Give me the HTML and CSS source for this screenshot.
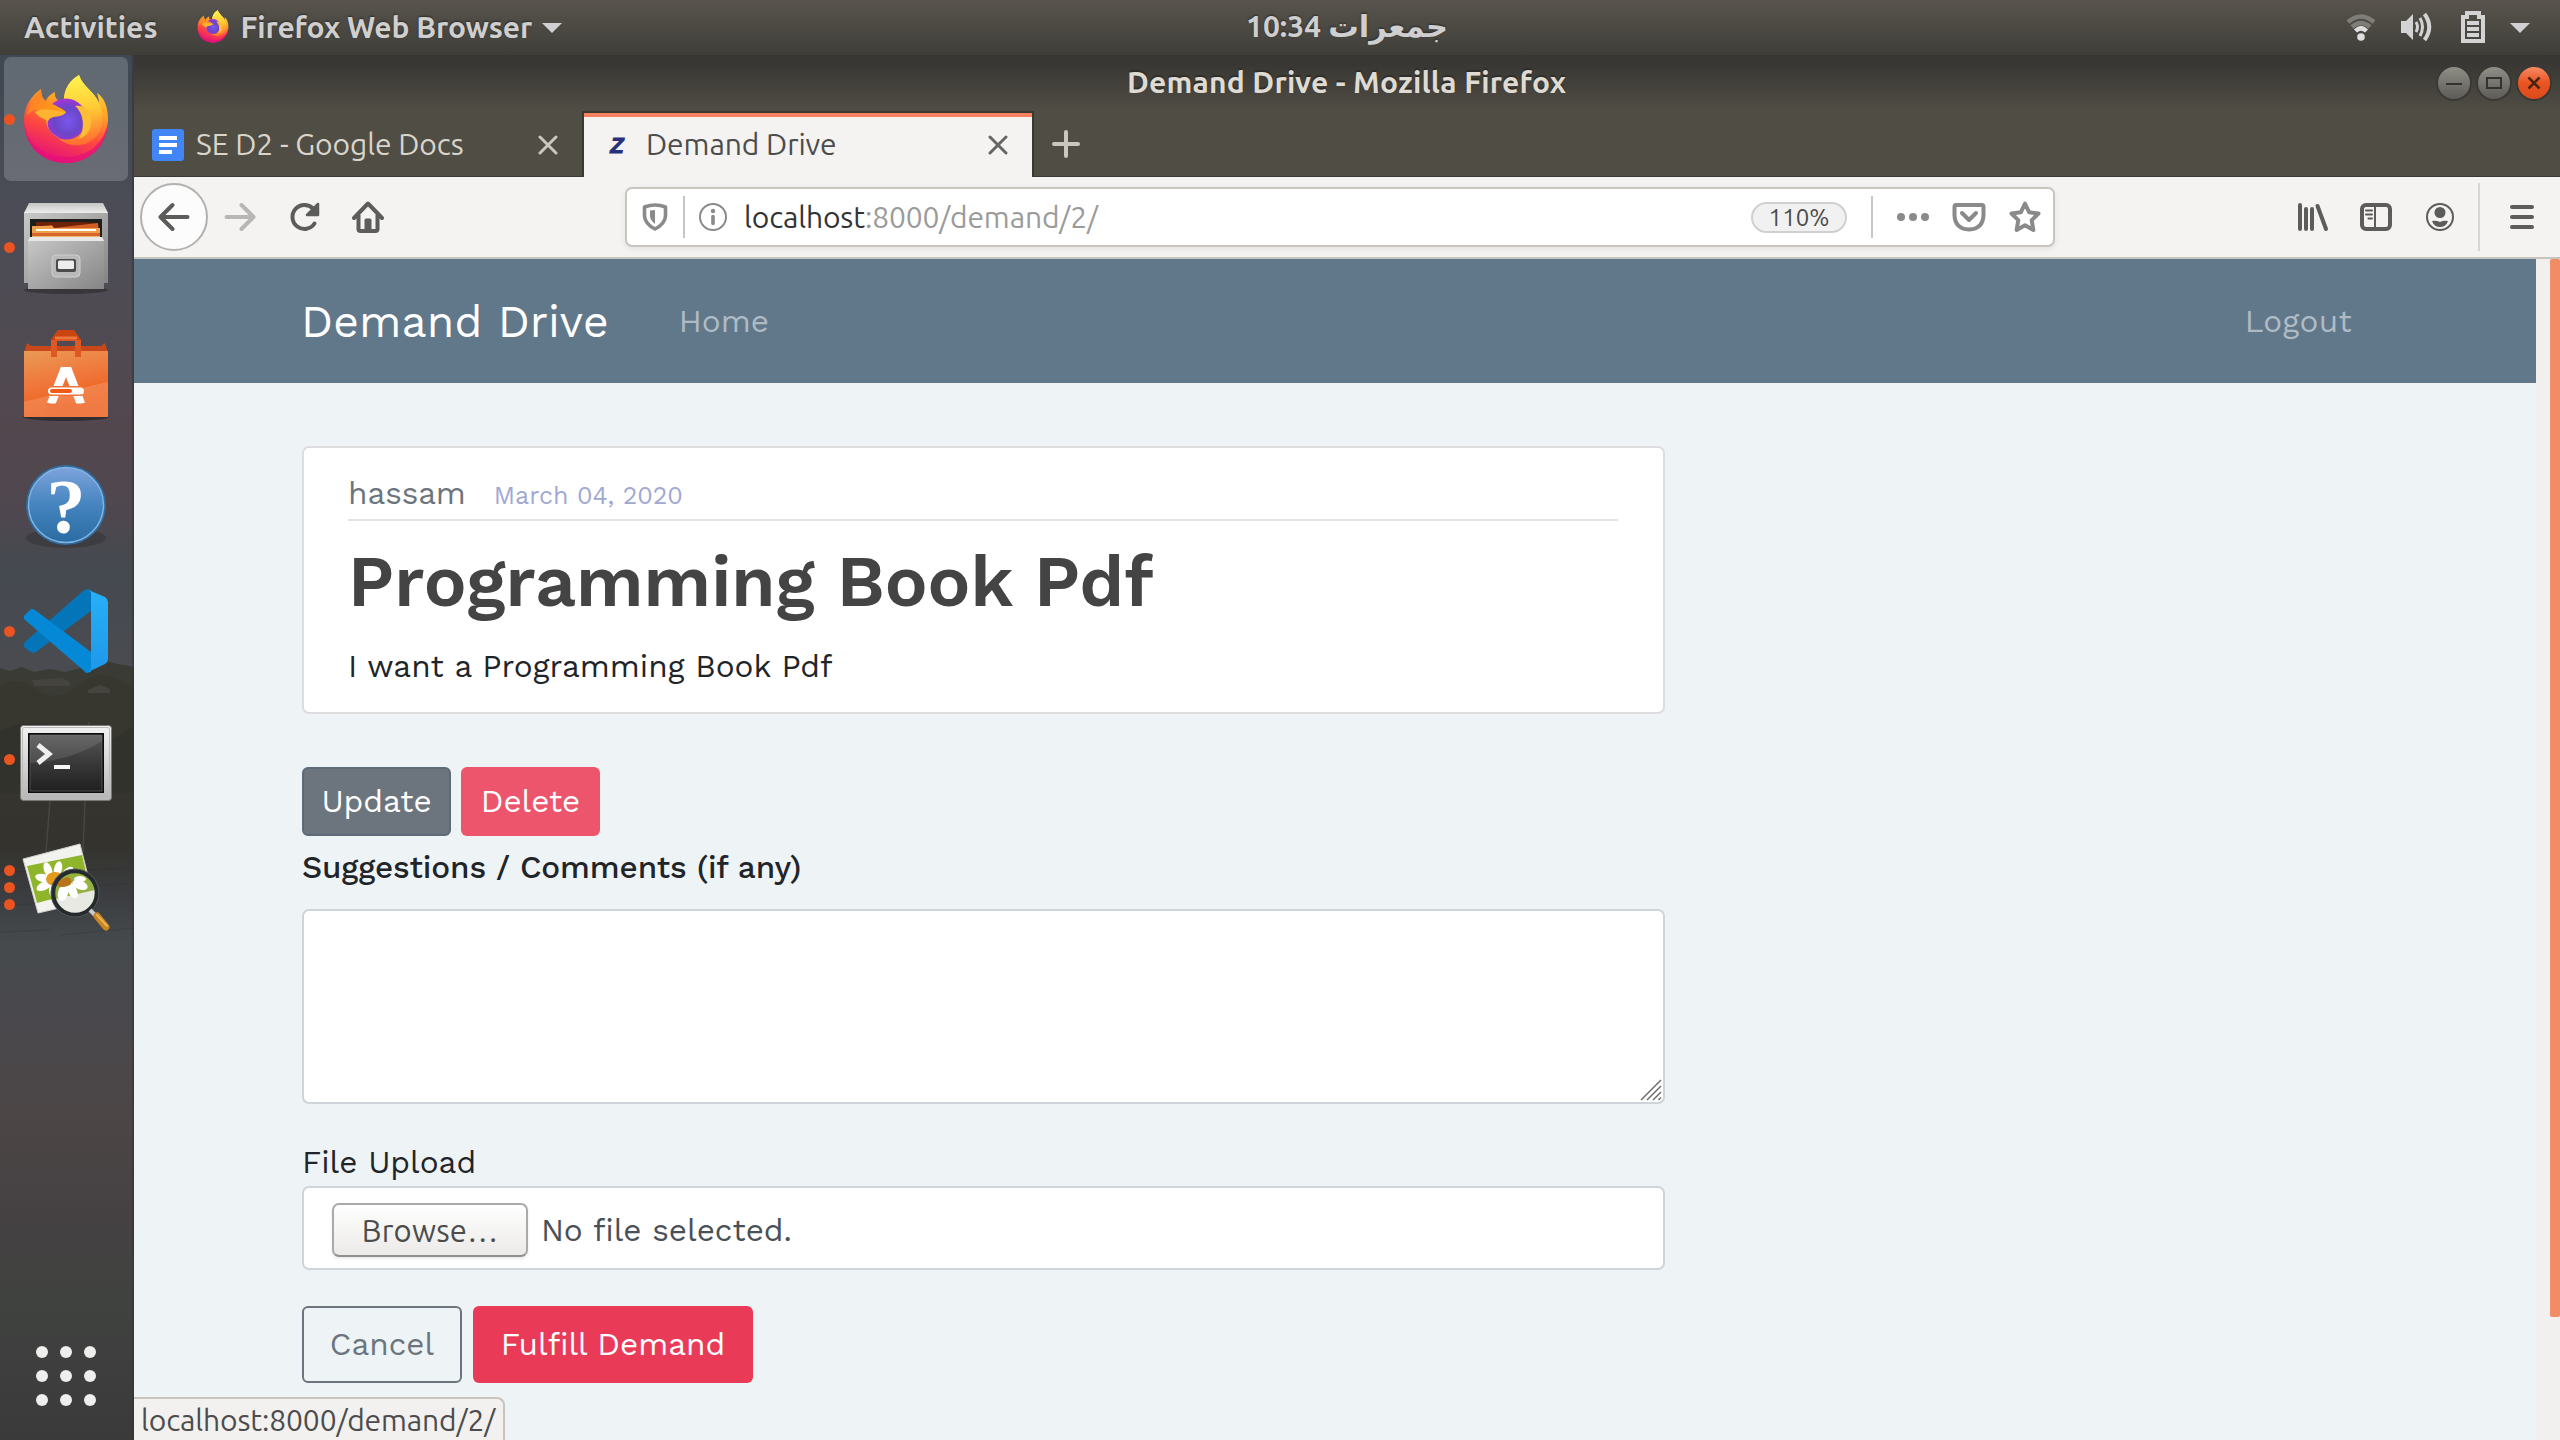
FILE: index.html
```html
<!DOCTYPE html>
<html lang="en">
<head>
<meta charset="utf-8">
<title>Demand Drive</title>
<link rel="stylesheet" href="styles.css">
</head>
<body>
<svg class="defs" width="0" height="0" aria-hidden="true">
  <defs>
    <linearGradient id="ffBody" x1=".75" y1="0" x2=".4" y2="1"><stop offset="0" stop-color="#ffe33d"/><stop offset=".35" stop-color="#ffa426"/><stop offset=".65" stop-color="#ff4a3d"/><stop offset="1" stop-color="#e5117a"/></linearGradient>
    <linearGradient id="ffTail" x1=".4" y1="0" x2=".5" y2="1"><stop offset="0" stop-color="#fff44f"/><stop offset=".5" stop-color="#ffcb35"/><stop offset="1" stop-color="#ff6a2f"/></linearGradient>
    <linearGradient id="ffHead" x1="0" y1="0" x2="1" y2=".6"><stop offset="0" stop-color="#ff7a2a"/><stop offset="1" stop-color="#ffa712"/></linearGradient>
    <radialGradient id="ffGlobe" cx=".55" cy=".55" r=".6"><stop offset="0" stop-color="#7b57f0"/><stop offset=".55" stop-color="#6a46c8"/><stop offset="1" stop-color="#b030d8"/></radialGradient>
    <linearGradient id="steel" x1="0" y1="0" x2="1" y2="1"><stop offset="0" stop-color="#c9c9c9"/><stop offset="1" stop-color="#858585"/></linearGradient>
    <linearGradient id="steelTop" x1="0" y1="0" x2="0" y2="1"><stop offset="0" stop-color="#c4c4c4"/><stop offset="1" stop-color="#ededed"/></linearGradient>
    <linearGradient id="bag" x1="0" y1="0" x2=".3" y2="1"><stop offset="0" stop-color="#e99a55"/><stop offset=".5" stop-color="#f0783c"/><stop offset=".7" stop-color="#ee6c2c"/><stop offset=".71" stop-color="#f2814a"/><stop offset="1" stop-color="#f07a44"/></linearGradient>
    <linearGradient id="help" x1="0" y1="0" x2="0" y2="1"><stop offset="0" stop-color="#7da3dc"/><stop offset=".5" stop-color="#4584bf"/><stop offset="1" stop-color="#2a6ca3"/></linearGradient>
    <linearGradient id="vsRight" x1="0" y1="0" x2="0" y2="1"><stop offset="0" stop-color="#27b1f7"/><stop offset="1" stop-color="#1e97ea"/></linearGradient>
    <linearGradient id="frame" x1="0" y1="0" x2="0" y2="1"><stop offset="0" stop-color="#f2f2f2"/><stop offset=".5" stop-color="#d5d5d5"/><stop offset="1" stop-color="#b5b5b5"/></linearGradient>
    <linearGradient id="screen" x1="0" y1="0" x2="0" y2="1"><stop offset="0" stop-color="#565656"/><stop offset=".45" stop-color="#3b3b3b"/><stop offset="1" stop-color="#202020"/></linearGradient>
    <linearGradient id="sky" x1="0" y1="0" x2="0" y2="1"><stop offset="0" stop-color="#3e4953"/><stop offset=".1" stop-color="#4a4c56"/><stop offset=".19" stop-color="#4f4b53"/><stop offset=".27" stop-color="#53474e"/><stop offset=".33" stop-color="#4f474f"/><stop offset=".37" stop-color="#454a50"/><stop offset=".44" stop-color="#494b50"/><stop offset=".46" stop-color="#494b4f"/></linearGradient>
    <linearGradient id="lake" x1="0" y1="0" x2="0" y2="1"><stop offset="0" stop-color="#35342f"/><stop offset=".08" stop-color="#34332e"/><stop offset=".16" stop-color="#3b3d40"/><stop offset=".23" stop-color="#464a4d"/><stop offset=".36" stop-color="#4a484c"/><stop offset=".5" stop-color="#4c4646"/><stop offset=".66" stop-color="#454142"/><stop offset=".78" stop-color="#404240"/><stop offset="1" stop-color="#3a3a3a"/></linearGradient>
    <symbol id="firefox" viewBox="24 16 84 90">
      <path d="M79 17C66 24 63 37 64 46C58 43 54 40 55 34C51 36 47 39 46 43C42 41 41 35 41 31C30 39 24 49 24 63C24 88 43 105 66 105S108 86 108 62C108 50 105 40 97 35C98 38 99 42 99 45C94 33 83 29 79 17Z" fill="url(#ffBody)"/>
      <path d="M79 17C66 24 63 37 64 46C77 44 87 54 84 68C81 82 66 84 57 79C72 94 98 88 102 66C103 52 101 50 99 45C94 33 83 29 79 17Z" fill="url(#ffTail)"/>
      <path d="M24 63C26 85 43 99 66 99S105 84 108 63C108 88 90 105 66 105S24 88 24 63Z" fill="#e5107a" opacity=".75"/>
      <circle cx="66" cy="61" r="20.500" fill="url(#ffGlobe)"/>
      <path d="M75 48C84 46 91 53 91 63C91 73 86 79 78 81C85 74 85 56 75 48Z" fill="#ffbd35"/>
      <path d="M41 31C36 36 30 46 27 57C34 50 39 50 46 58C44 68 52 78 60 80C50 76 45 68 49 60C54 57 63 60 66 54C62 50 56 48 46 43C42 41 41 35 41 31Z" fill="url(#ffHead)"/>
      <path d="M35 54C45 48 55 54 66 54C62 60 50 57 48 63C43 60 39 60 35 54Z" fill="#ffb431"/>
    </symbol>
  </defs>
</svg>

<div class="desktop">
  <header class="topbar">
    <span class="topbar-text">Activities</span>
    <svg class="app-icon" width="32" height="33"><use href="#firefox"/></svg>
    <span class="topbar-text app-name">Firefox Web Browser</span>
    <svg class="caret" width="20" height="10" viewBox="0 0 20 10"><path d="M0 0H20L10 10Z"/></svg>
    <span class="topbar-text clock">10:34 <span class="day">جمعرات</span></span>
    <div class="tray">
      <svg width="30" height="28" viewBox="0 0 30 28"><g fill="none" stroke-width="4.500"><path d="M2 9Q15 -2 28 9" stroke="#7f7d77"/><path d="M6 14Q15 6 24 14" stroke="#7f7d77"/><path d="M9.500 18Q15 12.500 20.500 18" stroke="#dedede"/></g><circle cx="15" cy="24" r="3.800" fill="#dedede"/></svg>
      <svg width="32" height="30" viewBox="0 0 32 30"><path d="M1 9H6L13 2V28L6 21H1Z" fill="#d3d3d3"/><g fill="none" stroke="#d3d3d3" stroke-width="3"><path d="M16 10Q19 15 16 20M20 6Q25 15 20 24"/><path d="M24.500 2Q34 15 24.500 28" stroke-width="4"/></g></svg>
      <svg width="26" height="32" viewBox="0 0 26 32"><path d="M1 4H5V0H21V4H25V32H1ZM5 8V28H21V8H17V4H9V8Z" fill="#d3d3d3" fill-rule="evenodd"/><path d="M7 10H19V14H7ZM7 16H19V20H7ZM7 22H19V26H7Z" fill="#d3d3d3"/></svg>
      <svg class="caret" width="20" height="10" viewBox="0 0 20 10"><path d="M0 0H20L10 10Z"/></svg>
    </div>
  </header>

  <nav class="dock">
    <svg class="wallpaper" width="134" height="1385" viewBox="0 55 134 1385" preserveAspectRatio="none">
      <rect y="55" width="134" height="1385" fill="url(#sky)"/>
      <path d="M0 668L10 671L22 667L34 672L50 669L66 672L84 667L98 665L106 661L118 664L134 667V795H0Z" fill="#3a3b35"/>
      <path d="M0 685Q20 676 38 690T80 684T134 690V795H0Z" fill="#37372f"/>
      <path d="M32 680L62 678L70 682V686H34ZM88 690L100 685L110 689V693H88Z" fill="#45443f"/>
      <path d="M0 730Q40 715 70 735T134 725V795H0Z" fill="#32322c"/>
      <rect y="793" width="134" height="647" fill="url(#lake)"/>
      <path d="M50 800L46 852M85 800L83 852M89 722V740" stroke="#5a5650" stroke-width="1.500" opacity=".55"/>
      <path d="M0 872H60L134 868M0 888L134 884M0 905L80 902M60 935L134 928M0 932L50 930" stroke="#33353a" stroke-width="1.500" opacity=".35"/>
      <path d="M133 55V1440" stroke="#33332f" stroke-width="2" opacity=".55"/>
    </svg>
    <div class="dock-item active">
      <div class="dots"><i></i></div>
      <svg width="84" height="90"><use href="#firefox"/></svg>
    </div>
    <div class="dock-item">
      <div class="dots"><i></i></div>
      <svg width="124" height="124" viewBox="4 0 124 124">
        <ellipse cx="66" cy="105" rx="42" ry="4" fill="#222" opacity=".5"/>
        <path d="M24 27H108V98H24Z" fill="url(#steel)"/><path d="M29 18H103L108 28H24Z" fill="url(#steelTop)"/>
        <path d="M30 34H102V56H30Z" fill="#1d1f1c"/><path d="M36 37H80L98 38V56H36Z" fill="#6e2208"/><path d="M32 42L52 40L54 43L98 38L100 56H32Z" fill="#d25d26"/><path d="M32 41H52L54 43H100V56H32Z" fill="#f0a04a"/><path d="M36 44H96V46H36Z" fill="#fff"/><path d="M32 48H100V51H32Z" fill="#d6652b"/><path d="M32 51H100V56H32Z" fill="#f0b56a"/>
        <path d="M30 52H102L104 55V104H28V55Z" fill="url(#steel)"/><path d="M30 52H102L104 56H28Z" fill="#e8e8e8"/>
        <rect x="52" y="70" width="28" height="22" rx="4" fill="#b9b9b9" stroke="#cfcfcf"/><rect x="56" y="74" width="20" height="13" rx="2" fill="#4b4b4b"/><rect x="58" y="75.500" width="16" height="8.500" rx="1.500" fill="#ededed"/>
      </svg>
    </div>
    <div class="dock-item">
      <svg width="124" height="124" viewBox="4 0 124 124">
        <ellipse cx="66" cy="104" rx="43" ry="4" fill="#1c1c1c" opacity=".6"/>
        <path d="M27 30L31 33H101L105 30L108 40H24Z" fill="#c9481b"/>
        <path d="M24 38H108V104H24Z" fill="url(#bag)"/>
        <path d="M51 44V27L58 17H74L81 27V44H75V28H57V44Z" fill="#dd5823"/><path d="M51 27L58 17H74L81 27Z" fill="#c9440f"/><path d="M55 25H77" stroke="#f0763f" stroke-width="3"/>
        <path d="M65 55L51 91M67 55L81 91" stroke="#fff" stroke-width="8.500" fill="none"/><path d="M61 54H71V59H61Z" fill="#fff"/>
        <path d="M46 90.500H86V98H46Z" fill="#f07a44"/><path d="M50 78H82" stroke="#f0733a" stroke-width="10"/><path d="M51.500 78H80.500" stroke="#fff" stroke-width="7" stroke-linecap="round"/><path d="M52 78H70" stroke="#f05a17" stroke-width="4" stroke-linecap="round"/>
      </svg>
    </div>
    <div class="dock-item">
      <svg width="124" height="124" viewBox="4 0 124 124">
        <ellipse cx="66" cy="97" rx="40" ry="10" fill="#222" opacity=".3"/>
        <circle cx="66" cy="64" r="40" fill="#2e6da4"/><circle cx="66" cy="64" r="37.500" fill="url(#help)" stroke="#86b2de" stroke-width="1.500"/>
        <text x="66" y="92" class="help-mark">?</text>
      </svg>
    </div>
    <div class="dock-item">
      <div class="dots"><i></i></div>
      <svg width="124" height="124" viewBox="4 0 124 124">
        <path d="M88 20L91 21V42L36 83Q32 85 29 82L24 78Q23 75 25 73L83 22Z" fill="#0475b8"/>
        <path d="M30 41Q32 39 35 41L91 83V103L86 104L83 101L24 50Q23 47 26 45Z" fill="#0589d6"/>
        <path d="M86 20L105 28Q108 30 108 33V90Q108 93 105 95L86 104Q91 103 91 99V25Q91 21 86 20Z" fill="url(#vsRight)"/>
      </svg>
    </div>
    <div class="dock-item">
      <div class="dots"><i></i></div>
      <svg width="124" height="124" viewBox="4 0 124 124">
        <rect x="20.500" y="28.500" width="91" height="75" rx="3" fill="url(#frame)" stroke="#777"/><rect x="22.500" y="30.500" width="87" height="71" rx="2" fill="none" stroke="#bbb"/>
        <rect x="28" y="36" width="76" height="60" fill="#0c0c0c"/><rect x="30" y="38" width="72" height="56" fill="url(#screen)" stroke="#666" stroke-width=".7"/>
        <path d="M30 66Q70 64 102 44V38H30Z" fill="#fff" opacity=".1"/>
        <path d="M38 48L49 57L38 66" fill="none" stroke="#eee" stroke-width="5"/><path d="M54 68H70V72H54Z" fill="#f5f5f5"/>
      </svg>
    </div>
    <div class="dock-item">
      <div class="dots"><i></i><i></i><i></i></div>
      <svg width="124" height="124" viewBox="4 0 124 124">
        <path d="M23 34L80 19L94 75L38 88Z" fill="#f2f2ee" stroke="#cfcfca"/>
        <path d="M27 41L82 30L90 64L37 78Z" fill="#8fb52a"/>
        <g fill="#fff"><ellipse cx="48" cy="45" rx="4" ry="8" transform="rotate(-20 48 45)"/><ellipse cx="58" cy="44" rx="4" ry="8" transform="rotate(12 58 44)"/><ellipse cx="67" cy="48" rx="4" ry="8" transform="rotate(45 67 48)"/><ellipse cx="43" cy="53" rx="8" ry="4" transform="rotate(12 43 53)"/><ellipse cx="44" cy="61" rx="8" ry="4" transform="rotate(-25 44 61)"/><ellipse cx="53" cy="65" rx="4" ry="7"/></g>
        <ellipse cx="55" cy="54" rx="9" ry="7" fill="#e39a1e"/>
        <circle cx="75" cy="68" r="21" fill="#93b240"/>
        <path d="M55 74L95 65Q95 84 78 89Q62 89 55 74Z" fill="#e9e9e4"/>
        <g fill="#fff"><ellipse cx="63" cy="68" rx="5" ry="8" transform="rotate(15 63 68)"/><ellipse cx="72" cy="65" rx="4.500" ry="9" transform="rotate(-28 72 65)"/><ellipse cx="80" cy="60" rx="8" ry="4.500" transform="rotate(20 80 60)"/><ellipse cx="80" cy="54" rx="6" ry="3"/></g>
        <path d="M56 60Q60 53 68 52Q74 56 70 60Q62 64 56 60Z" fill="#b8741a"/>
        <circle cx="75" cy="68" r="22" fill="none" stroke="#252a2d" stroke-width="4.500"/><circle cx="75" cy="68" r="24" fill="none" stroke="#60666a" stroke-width=".8"/>
        <path d="M90 85L96 91" stroke="#c9c9c9" stroke-width="4"/><path d="M97 91L106 102" stroke="#c98524" stroke-width="7" stroke-linecap="round"/><path d="M97 90L107 101" stroke="#eab35a" stroke-width="2" stroke-linecap="round"/>
      </svg>
    </div>
    <div class="apps-grid"><i></i><i></i><i></i><i></i><i></i><i></i><i></i><i></i><i></i></div>
  </nav>

  <section class="window">
    <div class="titlebar">
      <span class="window-title">Demand Drive - Mozilla Firefox</span>
      <div class="window-buttons">
        <svg class="wb" width="32" height="32" viewBox="0 0 32 32"><path d="M8 17H24" stroke="#33322d" stroke-width="2"/></svg>
        <svg class="wb" width="32" height="32" viewBox="0 0 32 32"><rect x="9" y="11" width="14" height="10" fill="none" stroke="#33322d" stroke-width="2"/></svg>
        <svg class="wb wb-close" width="32" height="32" viewBox="0 0 32 32"><path d="M10.500 10.500L21.500 21.500M21.500 10.500L10.500 21.500" stroke="#4a2312" stroke-width="2.500"/></svg>
      </div>
    </div>
    <div class="tabs">
      <div class="tab">
        <svg width="32" height="32" viewBox="0 0 32 32"><rect width="32" height="32" rx="3" fill="#4285f4"/><path d="M7 7H25V11H7ZM7 14H25V18H7ZM7 21H20V25H7Z" fill="#fff"/></svg>
        <span class="tab-label">SE D2 - Google Docs</span>
        <svg class="tab-x" width="20" height="20" viewBox="0 0 20 20"><path d="M2 2L18 18M18 2L2 18"/></svg>
      </div>
      <div class="tab tab-active">
        <svg width="32" height="32" viewBox="0 0 32 32"><text x="17" y="24" class="z-mark">Z</text></svg>
        <span class="tab-label">Demand Drive</span>
        <svg class="tab-x" width="20" height="20" viewBox="0 0 20 20"><path d="M2 2L18 18M18 2L2 18"/></svg>
      </div>
      <svg class="tab-plus" width="28" height="28" viewBox="0 0 28 28"><path d="M14 2V26M2 14H26"/></svg>
    </div>
    <div class="toolbar">
      <div class="back"><svg width="32" height="32" viewBox="0 0 32 32"><path d="M29.500 16H3M14.500 4L2.500 16L14.500 28"/></svg></div>
      <svg class="tool forward" width="32" height="32" viewBox="0 0 32 32"><path d="M2.500 16H29M17.500 4L29.500 16L17.500 28"/></svg>
      <svg class="tool reload" width="32" height="32" viewBox="0 0 32 32"><path d="M25.500 22.500A12 12 0 1 1 24 7.500"/><path d="M29 3V14H18Z" fill="#5c5c5a" stroke-width="2.500"/></svg>
      <svg class="tool home" width="32" height="32" viewBox="0 0 32 32"><path d="M2 17L16 2.500L30 17M6.500 14V28Q6.500 30 8.500 30H23.500Q25.500 30 25.500 28V14"/><path d="M12.500 30V19Q12.500 17.500 14 17.500H18Q19.500 17.500 19.500 19V30Z" fill="#5c5c5a" stroke="none"/></svg>
      <div class="urlbar">
        <svg class="shield" width="26" height="28" viewBox="0 0 26 28"><path d="M2.500 4Q13 0 23.500 4V13Q23 21 13 26Q3 21 2.500 13Z" fill="none" stroke="#8a8a8a" stroke-width="3.600" stroke-linejoin="round"/><path d="M13 7V21Q8 17 8 13V7.500Z" fill="#8a8a8a"/></svg>
        <i class="sep"></i>
        <svg class="info" width="28" height="28" viewBox="0 0 28 28"><circle cx="14" cy="14" r="13" fill="none" stroke="#8a8a8a" stroke-width="2"/><circle cx="14" cy="8" r="2.200" fill="#8a8a8a"/><path d="M14 13.500V20.500" stroke="#8a8a8a" stroke-width="3.600" stroke-linecap="round"/></svg>
        <span class="url"><b>localhost</b>:8000/demand/2/</span>
        <span class="zoom-level">110%</span>
        <i class="sep sep-right"></i>
        <svg class="more" width="34" height="10" viewBox="0 0 34 10"><circle cx="5" cy="5" r="4"/><circle cx="17" cy="5" r="4"/><circle cx="29" cy="5" r="4"/></svg>
        <svg class="act pocket" width="34" height="30" viewBox="0 0 34 30"><path d="M4 3H30Q31.500 3 31.500 5V13Q31 27 17 27.500Q3 27 2.500 13V5Q2.500 3 4 3ZM10 11L17 18L24 11"/></svg>
        <svg class="act star" width="32" height="32" viewBox="0 0 32 32"><path d="M16 2.500L20.200 11.300L29.500 12.500L22.700 19.200L24.400 29L16 24.200L7.600 29L9.300 19.200L2.500 12.500L11.800 11.300Z"/></svg>
      </div>
      <svg class="tool library" width="32" height="30" viewBox="0 0 32 30"><path d="M3 3V27M9 7V27M15 7V27M20.500 4L29 27" stroke-width="4"/></svg>
      <svg class="tool sidebar" width="32" height="28" viewBox="0 0 32 28"><rect x="2" y="2" width="28" height="24" rx="4" stroke-width="4"/><path d="M15 2V26" stroke-width="2"/><path d="M6 7.500H12M6 11.500H12M8.500 15.500H12" stroke-width="2"/></svg>
      <svg class="tool account" width="28" height="28" viewBox="0 0 28 28"><circle cx="14" cy="14" r="13" stroke-width="2"/><circle cx="14" cy="9.500" r="5.500" fill="#5c5c5a" stroke="none"/><path d="M6 18Q10 17 14 19Q18 17 22 18Q20 24 14 24Q8 24 6 18Z" fill="#5c5c5a" stroke="none"/></svg>
      <i class="tool-sep"></i>
      <svg class="tool menu" width="26" height="26" viewBox="0 0 26 26"><path d="M3 3H23M3 13H23M3 23H23" stroke-width="4"/></svg>
    </div>

    <div class="viewport">
      <div class="page">
        <div class="navbar">
          <span class="brand">Demand Drive</span>
          <span class="nav-link home-link">Home</span>
          <span class="nav-link logout">Logout</span>
        </div>
        <main class="content">
          <article class="card">
            <div class="meta"><span class="author">hassam</span><span class="date">March 04, 2020</span></div>
            <h1>Programming Book Pdf</h1>
            <p>I want a Programming Book Pdf</p>
          </article>
          <div class="row actions">
            <span class="btn btn-update">Update</span>
            <span class="btn btn-delete">Delete</span>
          </div>
          <label class="label-comments">Suggestions / Comments (if any)</label>
          <div class="comments"><textarea></textarea><svg class="grip" width="22" height="22" viewBox="0 0 22 22"><path d="M1 21L21 1M7 21L21 7M13 21L21 13M18.500 21L21 18.500"/></svg></div>
          <label class="label-file">File Upload</label>
          <div class="file-input"><span class="browse">Browse…</span><span class="no-file">No file selected.</span></div>
          <div class="row submit">
            <span class="btn btn-cancel">Cancel</span>
            <span class="btn btn-fulfill">Fulfill Demand</span>
          </div>
        </main>
      </div>
      <div class="scrollbar"><div class="thumb"></div></div>
      <div class="status">localhost:8000/demand/2/</div>
    </div>
  </section>
</div>
</body>
</html>
```
FILE: styles.css
```css
* { box-sizing: border-box; }
html, body { margin: 0; height: 100%; overflow: hidden; }
body { font-family: Ubuntu, "Noto Sans", "Open Sans", sans-serif; font-size: 30px; line-height: 1; color: #4c4c4c; white-space: nowrap; }
svg { display: block; flex: none; }
.defs { position: absolute; }
.desktop { display: grid; grid-template: 55px 1385px / 134px 2426px; width: 2560px; height: 1440px; }

/* top panel */
.topbar { grid-column: 1 / 3; position: relative; display: flex; align-items: center; padding: 0 30px 2px 24px; background: linear-gradient(#58544d, #3f3e39); }
.topbar-text { font-weight: 700; color: #cfcfcf; text-shadow: 0 -1px 2px #2b2a27; }
.app-icon { margin-left: 39px; }
.app-name { margin-left: 12px; letter-spacing: -.15px; }
.caret { fill: #d0d0d0; margin-left: 10px; margin-top: 2px; }
.clock { position: absolute; left: 1246px; }
.day { font-family: "DejaVu Sans", sans-serif; font-size: 30.500px; }
.tray { margin-left: auto; display: flex; align-items: center; }
.tray svg + svg { margin-left: 24px; }
.tray svg:nth-child(3) { margin-left: 28px; }

/* launcher */
.dock { position: relative; display: flex; flex-direction: column; gap: 4px; padding: 2px 0 0 4px; }
.wallpaper { position: absolute; left: 0; top: 0; }
.dock-item { position: relative; width: 124px; height: 124px; display: flex; align-items: center; justify-content: center; border-radius: 7px; }
.active { background: rgba(255, 255, 255, .18); }
.active svg { margin-top: -1px; }
.dots { position: absolute; left: 0; top: 0; height: 124px; display: flex; flex-direction: column; justify-content: center; gap: 6px; }
.dots i { width: 11px; height: 11px; border-radius: 50%; background: #e95420; }
.help-mark { font: 700 78px "Liberation Serif", serif; fill: #fff; text-anchor: middle; }
.apps-grid { position: relative; display: grid; grid-template-columns: repeat(3, 12px); gap: 12px; margin: auto 0 34px 32px; }
.apps-grid i { width: 12px; height: 12px; border-radius: 50%; background: #eeeeec; }

/* window chrome */
.window { display: flex; flex-direction: column; min-width: 0; background: #504d45; }
.titlebar { height: 56px; display: flex; align-items: center; background: linear-gradient(#393733 8px, #504d45); }
.window-title { margin-left: 993px; margin-top: -3px; font-weight: 700; letter-spacing: .2px; color: #dfdbd2; text-shadow: 0 -2px 1px #2e2d29; }
.window-buttons { display: flex; gap: 8px; margin-left: auto; margin-right: 10px; }
.wb { border-radius: 50%; background: linear-gradient(#8f8e87, #5c5b56); box-shadow: 0 0 0 2px #3a3935; }
.wb-close { background: linear-gradient(#f78a64, #ea5420 50%, #dd4a1b); }
.tabs { height: 66px; display: flex; align-items: stretch; border-bottom: 1px solid #3a3833; }
.tab { width: 448px; display: flex; align-items: center; padding: 2px 24px 0 18px; color: #d9d5cb; }
.tab-label { margin-left: 12px; margin-top: -2px; letter-spacing: -.08px; }
.tab-x { margin-left: auto; fill: none; stroke: #cbc7bd; stroke-width: 3; stroke-linecap: round; }
.tab-active { width: 452px; height: 66px; margin-bottom: -1px; background: #f4f3f2; border: 2px solid #3a3833; border-bottom: 0; box-shadow: inset 0 4px #f58160; color: #4c4c4c; padding: 0 24px 0 16px; }
.tab-active .tab-label { margin-left: 14px; }
.tab-active .tab-x { stroke: #666; }
.tab-plus { margin: 19px 0 0 18px; fill: none; stroke: #cbc7bd; stroke-width: 4; stroke-linecap: round; }
.z-mark { font: italic 700 22px "Liberation Sans", sans-serif; fill: #28307c; stroke: #28307c; text-anchor: middle; }

.toolbar { height: 82px; display: flex; align-items: center; padding: 0 25px 0 6px; background: #f4f3f2; border-bottom: 2px solid #c7c3bf; }
.toolbar svg { fill: none; stroke-linecap: round; stroke-linejoin: round; }
.tool, .back svg { stroke: #5c5c5a; stroke-width: 4; }
.back { width: 68px; height: 68px; border: 2px solid #b3b1ae; border-radius: 50%; background: #fcfcfc; display: flex; align-items: center; justify-content: center; }
.forward { margin-left: 16px; stroke: #b8b7b5; }
.reload { margin-left: 33px; }
.home { margin-left: 31px; }
.urlbar { width: 1430px; height: 60px; margin-left: 241px; background: #fff; border: 2px solid #c8c4c0; border-radius: 7px; box-shadow: 0 2px 6px rgba(0, 0, 0, .07); display: flex; align-items: center; }
.shield { margin-left: 15px; }
.sep { width: 2px; height: 42px; background: #c8c6c3; margin-left: 15px; }
.info { margin-left: 14px; }
.url { margin-left: 17px; letter-spacing: -.13px; color: #9b9b9b; }
.url b { font-weight: 400; color: #333; }
.zoom-level { margin-left: auto; width: 96px; height: 31px; padding-top: 1px; border: 2px solid #d0d0d0; border-radius: 16px; background: #f1f1f1; display: flex; align-items: center; justify-content: center; font-size: 24px; }
.sep-right { margin-left: 24px; }
.more { margin-left: 23px; }
.urlbar .more { fill: #8a8a8a; }
.act { stroke: #8a8a8a; stroke-width: 4; }
.pocket { margin-left: 22px; }
.star { margin-left: 23px; margin-right: 12px; }
.library { margin-left: 242px; }
.sidebar { margin-left: 31px; }
.account { margin-left: 34px; }
.tool-sep { width: 2px; height: 68px; background: #d8d6d4; margin-left: 24px; }
.menu { margin-left: auto; }

/* web page */
.viewport { position: relative; flex: 1; display: flex; min-height: 0; }
.page { width: 2402px; background: #eef3f6; font-family: "Work Sans", "Open Sans", sans-serif; font-size: 31.500px; color: #212529; }
.navbar { height: 124px; background: #61788b; display: flex; align-items: center; padding: 2px 184px 0 167px; }
.brand { font-size: 44.500px; letter-spacing: .1px; color: #fff; }
.nav-link { color: #afbbc4; }
.home-link { margin-left: 70px; }
.logout { margin-left: auto; letter-spacing: .3px; }
.content { width: 1363px; margin-left: 168px; padding-top: 63px; display: flex; flex-direction: column; }
.card { height: 268px; border: 2px solid #dddddd; border-radius: 7px; background: #fff; padding: 24px 45px 0 44px; }
.meta { height: 49px; border-bottom: 2px solid #e3e3e3; display: flex; align-items: center; padding-bottom: 4px; }
.author { color: #6c757d; letter-spacing: -.1px; }
.date { color: #a1a8d3; font-size: 25px; margin-left: 28px; margin-top: 4px; }
h1 { margin: 28px 0 0; font-size: 71.500px; font-weight: 600; line-height: 66px; color: #444; }
p { margin: 32px 0 0; line-height: 40px; }
.row { display: flex; }
.btn { display: flex; align-items: center; justify-content: center; border-radius: 6px; color: #fff; }
.actions { margin-top: 53px; gap: 10px; }
.btn-update { width: 149px; height: 69px; background: #6c757d; border: 2px solid #5d6b78; }
.btn-delete { width: 139px; height: 69px; background: #ed556c; }
.label-comments { margin-top: 12px; line-height: 40px; font-weight: 500; letter-spacing: -.15px; }
.comments { position: relative; margin-top: 21px; height: 195px; }
textarea { display: block; width: 100%; height: 100%; resize: none; border: 2px solid #ced4da; border-radius: 7px; background: #fff; }
.grip { position: absolute; right: 3px; bottom: 3px; fill: none; stroke: #6e6e6e; stroke-width: 1.500; }
.label-file { margin-top: 39px; line-height: 40px; }
.file-input { margin-top: 3px; height: 84px; border: 2px solid #ced4da; border-radius: 7px; background: #fff; display: flex; align-items: center; padding: 4px 28px 0; }
.browse { width: 196px; height: 54px; border: 2px solid #aaa; border-bottom-color: #8f8f8f; border-radius: 7px; background: linear-gradient(#fff, #ebeae8); box-shadow: 0 2px 3px rgba(0, 0, 0, .08); display: flex; align-items: center; justify-content: center; font: 31px/1 Ubuntu, "Noto Sans", sans-serif; letter-spacing: .2px; color: #4c4c4c; }
.no-file { margin: 2px 0 0 13px; color: #495057; }
.submit { margin-top: 36px; gap: 11px; }
.btn-cancel { width: 160px; height: 77px; border: 2px solid #6c757d; color: #6c757d; }
.btn-fulfill { width: 280px; height: 77px; background: #e93b57; }
.scrollbar { width: 24px; background: #f2f0ee; display: flex; justify-content: flex-end; }
.thumb { width: 10px; height: 1058px; border-radius: 2px; background: #f28c66; }
.status { position: absolute; left: 0; bottom: 0; width: 371px; height: 43px; border: 2px solid #c8c4c0; border-width: 2px 2px 0 0; border-radius: 0 8px 0 0; background: #f2f1f0; display: flex; align-items: center; padding: 1px 0 0 7px; letter-spacing: -.12px; }
```
